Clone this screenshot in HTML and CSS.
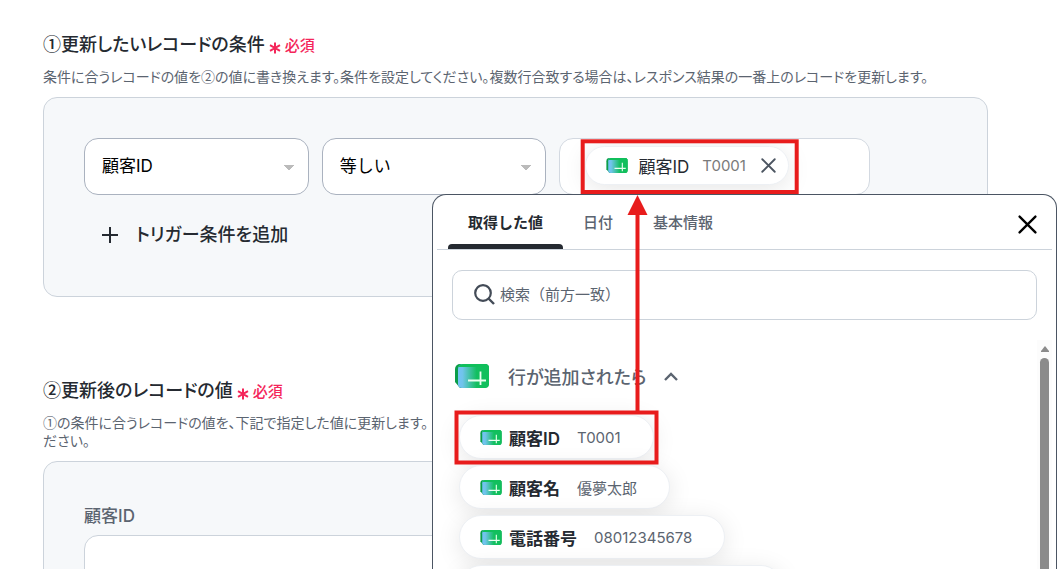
FILE: index.html
```html
<!DOCTYPE html>
<html lang="ja">
<head>
<meta charset="utf-8">
<title>レコードの更新条件</title>
<link rel="stylesheet" href="styles.css">
</head>
<body>
<svg class="defs" aria-hidden="true">
  <defs>
    <linearGradient id="blue-green" x1="0" x2="1" y1="0" y2="0">
      <stop offset="0" stop-color="#74c2f7"/>
      <stop offset="0.15" stop-color="#70c4ea"/>
      <stop offset="0.6" stop-color="#13bf60"/>
      <stop offset="1" stop-color="#10bf5b"/>
    </linearGradient>
    <symbol id="row-add" viewBox="0 0 34 24">
      <path d="M5 0H29a5 5 0 0 1 5 5V19a5 5 0 0 1-5 5H5L0 18V5a5 5 0 0 1 5-5Z" fill="#0b9d4a"/>
      <path d="M8 0H30a4 4 0 0 1 4 4V20a4 4 0 0 1-4 4H7a4 4 0 0 1-4-4V5a5 5 0 0 1 5-5Z" fill="url(#blue-green)"/>
      <path d="M8 0H30a4 4 0 0 1 4 4V3H3C4 1 6 0 8 0Z" fill="#10bf5b"/>
      <path d="M13 16.500H31M25.500 7.500V21" fill="none" stroke="#e9fff0" stroke-width="1.800"/>
    </symbol>
    <symbol id="asterisk" viewBox="0 0 12 12">
      <path d="M6 0.500V11.500M1 3.200L11 8.800M1 8.800L11 3.200" fill="none" stroke="currentColor" stroke-width="2"/>
    </symbol>
    <symbol id="cross" viewBox="0 0 18 18">
      <path d="M1.500 1.500L16.500 16.500M16.500 1.500L1.500 16.500" fill="none" stroke="currentColor" stroke-width="2.200" stroke-linecap="round"/>
    </symbol>
  </defs>
</svg>
<main class="page">
  <section class="section">
    <h2 class="title">①更新したいレコードの条件 <span class="required"><svg class="star"><use href="#asterisk"/></svg>必須</span></h2>
    <p class="note">条件に合うレコードの値を②の値に書き換えます。条件を設定してください。複数行合致する場合は、レスポンス結果の一番上のレコードを更新します。</p>
    <div class="panel">
      <div class="condition">
        <select class="select" aria-label="項目"><option>顧客ID</option></select>
        <select class="select" aria-label="比較方法"><option>等しい</option></select>
        <div class="value-field">
          <div class="chip chip-selected">
            <svg class="chip-icon"><use href="#row-add"/></svg>
            <span class="chip-name">顧客ID</span>
            <span class="chip-value">T0001</span>
            <button class="chip-remove" type="button" aria-label="削除"><svg class="remove-icon"><use href="#cross"/></svg></button>
          </div>
        </div>
      </div>
      <button class="add" type="button">
        <svg class="plus" viewBox="0 0 16 16"><path d="M8 0V16M0 8H16" fill="none" stroke="currentColor" stroke-width="2"/></svg>
        トリガー条件を追加
      </button>
    </div>
  </section>

  <section class="section">
    <h2 class="title">②更新後のレコードの値 <span class="required"><svg class="star"><use href="#asterisk"/></svg>必須</span></h2>
    <p class="note">①の条件に合うレコードの値を、下記で指定した値に更新します。<br>ださい。</p>
    <div class="panel">
      <label class="label" for="customer-id">顧客ID</label>
      <input class="text-input" id="customer-id" type="text">
    </div>
  </section>

  <div class="popover" role="dialog" aria-label="値の選択">
    <div class="tabs">
      <button class="tab tab-active" type="button">取得した値</button>
      <button class="tab" type="button">日付</button>
      <button class="tab" type="button">基本情報</button>
      <button class="close" type="button" aria-label="閉じる"><svg class="close-icon"><use href="#cross"/></svg></button>
    </div>
    <div class="search">
      <svg class="search-icon" viewBox="0 0 21 21"><circle cx="9" cy="9" r="7.800" fill="none" stroke="currentColor" stroke-width="2.200"/><path d="M14.500 14.500L20 20" stroke="currentColor" stroke-width="2.400"/></svg>
      <input class="search-input" type="text" aria-label="検索" placeholder="検索（前方一致）">
    </div>
    <div class="results">
      <div class="groups">
        <button class="group" type="button">
          <svg class="group-icon"><use href="#row-add"/></svg>
          行が追加されたら
          <svg class="chevron" viewBox="0 0 14 9"><path d="M1 8L7 2L13 8" fill="none" stroke="currentColor" stroke-width="2.400"/></svg>
        </button>
        <div class="chips">
          <button class="chip" type="button"><svg class="chip-icon"><use href="#row-add"/></svg><span class="chip-name">顧客ID</span><span class="chip-value">T0001</span></button>
          <button class="chip" type="button"><svg class="chip-icon"><use href="#row-add"/></svg><span class="chip-name">顧客名</span><span class="chip-value">優夢太郎</span></button>
          <button class="chip" type="button"><svg class="chip-icon"><use href="#row-add"/></svg><span class="chip-name">電話番号</span><span class="chip-value">08012345678</span></button>
          <div class="chip chip-next"></div>
        </div>
      </div>
      <div class="scrollbar" aria-hidden="true">
        <svg class="scroll-up" viewBox="0 0 8 6"><path d="M4 0L8 5V6H0V5Z" fill="#8b8b8b"/></svg>
        <div class="thumb"></div>
      </div>
    </div>
  </div>

  <svg class="annotation" viewBox="0 0 220 328" aria-hidden="true">
    <g fill="none" stroke="#e81c1c" stroke-width="4">
      <rect x="128.700" y="3.300" width="214" height="50.700"/>
      <rect x="2.500" y="274.500" width="200" height="50"/>
      <path d="M183.500 274V74"/>
    </g>
    <path d="M183.500 57L193.500 77H173.500Z" fill="#e81c1c"/>
  </svg>
</main>
</body>
</html>
```
FILE: styles.css
```css
* {
  box-sizing: border-box;
}

body {
  margin: 0;
  background: #fff;
  color: #252a31;
  font-family: Inter, "Noto Sans CJK JP", sans-serif;
  font-size: 17px;
}

button,
input,
select {
  font: inherit;
  color: inherit;
}

button {
  border: 0;
  background: none;
  padding: 0;
}

.defs {
  position: absolute;
  width: 0;
  height: 0;
}

.page {
  position: relative;
  height: 100vh;
  overflow: hidden;
  padding: 31px 74px 0 43px;
}

.section {
  margin-bottom: 80px;
}

.title {
  margin: 0 0 10px;
  font-family: "Noto Sans CJK JP", sans-serif;
  font-size: 18px;
  font-weight: 500;
  line-height: 24px;
  font-feature-settings: "palt";
}

.required {
  color: #f4265a;
  font-size: 15px;
}

.star {
  width: 12px;
  height: 12px;
  margin-right: 4px;
  vertical-align: -3px;
}

.note {
  margin: 0 0 12px;
  color: #5b6470;
  font-family: "Noto Sans CJK JP", sans-serif;
  font-size: 14px;
  line-height: 18px;
  font-feature-settings: "palt";
}

.panel {
  padding: 40px;
  border: 1px solid #ccd3db;
  border-radius: 14px;
  background: #f6f8fa;
}

.condition {
  display: grid;
  grid-template-columns: 225fr 225fr 311fr;
  gap: 13px;
  padding-right: 77px;
}

.select,
.value-field {
  height: 57px;
  border: 1px solid #aab2bf;
  border-radius: 14px;
  background-color: #fff;
}

.select {
  appearance: none;
  min-width: 0;
  padding: 0 17px 2px;
  color: #000;
  background-image: linear-gradient(to top right, transparent 50%, #bbb 50%), linear-gradient(to top left, transparent 50%, #bbb 50%);
  background-size: 6px 5px, 6px 5px;
  background-position: right 19px top 26px, right 13px top 26px;
  background-repeat: no-repeat;
}

.value-field {
  display: flex;
  align-items: center;
  overflow: hidden;
  padding: 0 25px 2px;
  border-color: #d3d9e1;
}

.chip {
  display: flex;
  align-items: center;
  height: 44px;
  padding: 0 32px 0 20px;
  border: 1px solid #edf0f4;
  border-radius: 22px;
  background: #fff;
  box-shadow: 0 4px 24px rgba(0, 0, 0, 0.1);
  white-space: nowrap;
}

.chip-icon {
  width: 22px;
  height: 15px;
  margin-right: 7px;
}

.chip-name {
  margin-right: 17px;
  font-weight: 600;
}

.chip-value {
  color: #5b6470;
  font-size: 15px;
}

.chip-selected {
  height: 39px;
  padding-right: 12px;
}

.chip-selected .chip-name {
  margin: 0 13px 0 3px;
  font-weight: 400;
}

.chip-selected .chip-value {
  color: #7a7a7a;
}

.chip-remove {
  display: flex;
  margin-left: 15px;
  color: #4c5561;
}

.remove-icon {
  width: 15px;
  height: 15px;
}

.add {
  display: flex;
  align-items: center;
  gap: 18px;
  margin: 28px 0 9px 18px;
  font-size: 18px;
  font-weight: 500;
  line-height: 24px;
  font-feature-settings: "palt";
}

.plus {
  width: 16px;
  height: 16px;
}

.label {
  display: block;
  margin-bottom: 5px;
  color: #5b6470;
  font-weight: 500;
  line-height: 28px;
}

.text-input {
  width: 100%;
  height: 57px;
  padding: 0 17px;
  border: 1px solid #ccd3db;
  border-radius: 14px;
  background: #fff;
}

.popover {
  position: absolute;
  top: 194px;
  right: 5px;
  bottom: 0;
  left: 432px;
  display: flex;
  flex-direction: column;
  padding: 0 4px;
  border: 1px solid #4b5563;
  border-bottom: 0;
  border-radius: 14px 14px 0 0;
  background: #fff;
}

.tabs {
  display: flex;
  height: 55px;
  padding: 0 15px 0 11px;
  border-bottom: 1px solid #ccd3db;
}

.tab {
  display: flex;
  flex-direction: column;
  color: #5b6470;
  font-size: 15px;
  font-weight: 500;
  line-height: 22px;
  padding: 17px 20px 0;
}

.tab-active {
  color: #252a31;
  font-weight: 600;
}

.tab-active::after {
  content: "";
  align-self: stretch;
  height: 5px;
  margin: 10px -20px 0;
  border-radius: 4px 4px 0 0;
  background: #252a31;
}

.close {
  display: flex;
  align-items: center;
  margin-left: auto;
  padding-top: 5px;
  color: #000;
}

.close-icon {
  width: 19px;
  height: 19px;
}

.search {
  display: flex;
  align-items: center;
  gap: 5px;
  flex-shrink: 0;
  height: 50px;
  margin: 20px 15px;
  padding: 0 21px 1px;
  border: 1px solid #ccd3db;
  border-radius: 10px;
}

.search-icon {
  width: 21px;
  height: 21px;
  color: #434b57;
}

.search-input {
  flex: 1;
  min-width: 0;
  padding: 0;
  border: 0;
  outline: 0;
  background: none;
  font-size: 15px;
}

.search-input::placeholder {
  color: #5b6470;
  opacity: 1;
}

.results {
  display: flex;
  flex: 1;
  min-height: 0;
}

.groups {
  flex: 1;
  overflow: hidden;
  padding: 22px 0 0 18px;
}

.group {
  display: flex;
  align-items: center;
  height: 28px;
  color: #5b6470;
  font-size: 18px;
  font-weight: 500;
  font-feature-settings: "palt";
}

.group-icon {
  width: 34px;
  height: 24px;
  margin-right: 19px;
}

.chevron {
  width: 14px;
  height: 9px;
  margin-left: 18px;
}

.chips {
  display: flex;
  flex-direction: column;
  align-items: flex-start;
  gap: 6px;
  padding: 25px 0 0 4px;
}

.chip-next {
  width: 324px;
}

.scrollbar {
  display: flex;
  flex-direction: column;
  align-items: center;
  gap: 6px;
  width: 15px;
  padding-top: 6px;
  background: #fcfcfc;
}

.scroll-up {
  flex-shrink: 0;
  width: 8px;
  height: 6px;
}

.thumb {
  flex: 1;
  width: 9px;
  border-radius: 5px 5px 0 0;
  background: #8b8b8b;
}

.annotation {
  position: absolute;
  top: 138px;
  left: 454px;
  width: 220px;
  height: 328px;
  overflow: visible;
  pointer-events: none;
}
```
